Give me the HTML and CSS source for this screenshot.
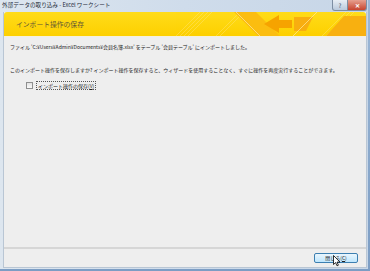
FILE: index.html
```html
<!DOCTYPE html>
<html lang="ja">
<head>
    <meta charset="UTF-8">
    <title>外部データの取り込み - Excel ワークシート</title>
    <link rel="stylesheet" href="styles.css">
</head>
<body>
    <div class="window">
        <div class="titlebar">
            <span class="title">外部データの取り込み - Excel ワークシート</span>
            <div class="caption-buttons">
                <span class="cap help">?</span>
                <span class="cap close">✕</span>
            </div>
        </div>
        <div class="client">
            <div class="banner">
                <span class="banner-title">インポート操作の保存</span>
                <svg class="banner-art" width="190" height="24" viewBox="0 0 190 24">
                    <g stroke="#ffe680" stroke-width="0.6" opacity="0.7">
                        <line x1="0" y1="24" x2="24" y2="0"/>
                        <line x1="4" y1="24" x2="28" y2="0"/>
                        <line x1="8" y1="24" x2="32" y2="0"/>
                        <line x1="12" y1="24" x2="36" y2="0"/>
                        <line x1="40" y1="24" x2="64" y2="0"/>
                        <line x1="44" y1="24" x2="68" y2="0"/>
                        <line x1="146" y1="24" x2="170" y2="0"/>
                        <line x1="150" y1="24" x2="174" y2="0"/>
                        <line x1="154" y1="24" x2="178" y2="0"/>
                    </g>
                    <polygon points="58,0 80,0 104,24 82,24" fill="#fbbd10"/>
                    <line x1="60" y1="0" x2="84" y2="24" stroke="#ffeaa0" stroke-width="0.7"/>
                    <polygon points="88,12 103,3 103,8 116,8 116,16 103,16 103,21" fill="#f6a300"/>
                    <polygon points="118,5 137,5 130,19 118,19" fill="#f8ae10"/>
                    <line x1="117" y1="24" x2="141" y2="0" stroke="#ffe9a0" stroke-width="0.7"/>
                    <polygon points="150,24 168,4 190,4 190,24" fill="#f8b010"/>
                </svg>
            </div>
            <div class="content">
                <p class="msg first">ファイル 'C:¥Users¥Admin¥Documents¥会員名簿.xlsx' をテーブル '会員テーブル' にインポートしました。</p>
                <p class="msg">このインポート操作を保存しますか? インポート操作を保存すると、ウィザードを使用することなく、すぐに操作を再度実行することができます。</p>
                <label class="check-row">
                    <span class="checkbox"></span>
                    <span class="check-label">インポート操作の保存(<u>V</u>)</span>
                </label>
            </div>
            <div class="footer">
                <button type="button" class="btn">閉じる(<u>C</u>)</button>
                <svg class="cursor" width="8" height="12" viewBox="0 0 8 12">
                    <path d="M0.5 0.5 L0.5 9.5 L2.6 7.6 L4 10.8 L5.4 10.2 L4 7.1 L7 7.1 Z" fill="#fff" stroke="#000" stroke-width="0.8"/>
                </svg>
            </div>
        </div>
    </div>
</body>
</html>
```

FILE: styles.css
```css
body {
    margin: 0;
    width: 370px;
    height: 271px;
    overflow: hidden;
    background: linear-gradient(#9db8d6, #7c9dc4);
    font-family: "Noto Sans CJK JP", "Liberation Sans", sans-serif;
}
.window {
    width: 368px;
    height: 269px;
    display: flex;
    flex-direction: column;
    background: linear-gradient(90deg, #dde6ef, #cfdceb 50%, #c7d6e7);
}
.titlebar {
    height: 12px;
    display: flex;
    align-items: flex-start;
    justify-content: space-between;
}
.title {
    font-size: 5.6px;
    line-height: 10px;
    color: #1e2a38;
    padding-left: 2px;
}
.caption-buttons {
    display: flex;
    margin-right: 1px;
}
.cap {
    height: 10px;
    display: flex;
    align-items: center;
    justify-content: center;
    font-size: 6px;
    color: #fff;
    border: 1px solid #7d8ea3;
    border-top: none;
}
.help {
    width: 14px;
    background: linear-gradient(#e8eef5, #b9c9dc);
    color: #3b4d63;
    border-radius: 0 0 0 3px;
}
.close {
    width: 18px;
    background: linear-gradient(#e6a08f, #c7452f);
    border-left: none;
    border-radius: 0 0 3px 0;
    font-weight: bold;
}
.client {
    flex: 1;
    margin: 0 1px 1px 3px;
    background: #eeeeee;
    display: flex;
    flex-direction: column;
    border: 1px solid #b9c6d4;
    border-top: none;
}
.banner {
    position: relative;
    height: 24px;
    display: flex;
    align-items: center;
    padding-left: 12px;
    background: linear-gradient(180deg, #ffdc1a, #fdd000);
    border-radius: 3px 3px 0 0;
    border-bottom: 1px solid #f5f0dc;
    overflow: hidden;
}
.banner-title {
    font-size: 6.8px;
    color: #5f5535;
}
.banner-art {
    position: absolute;
    right: 0;
    top: 0;
}
.content {
    flex: 1;
    padding: 6px 6px 0 6px;
}
.msg {
    margin: 0;
    font-size: 5px;
    line-height: 8px;
    color: #222;
    white-space: nowrap;
}
.msg.first {
    margin-bottom: 15px;
}
.check-row {
    display: flex;
    align-items: center;
    margin: 7px 0 0 16px;
    font-size: 5px;
    color: #222;
}
.checkbox {
    width: 5px;
    height: 5px;
    border: 1px solid #8e8f8f;
    background: linear-gradient(#e2e2e2, #fafafa);
    margin-right: 3px;
}
.check-label {
    border: 1px dotted #555;
    padding: 0 1px;
    line-height: 7px;
}
.footer {
    position: relative;
    height: 18px;
    border-top: 2px solid #d6d6d6;
    display: flex;
    align-items: center;
    justify-content: flex-end;
    padding-right: 8px;
}
.btn {
    width: 44px;
    height: 10px;
    padding: 0;
    font-family: inherit;
    font-size: 5px;
    line-height: 8px;
    color: #222;
    border: 1px solid #3c7fb1;
    border-radius: 2px;
    background: linear-gradient(#eaf6fd, #bee6fd);
}
.cursor {
    position: absolute;
    right: 25px;
    top: 6px;
}
```
